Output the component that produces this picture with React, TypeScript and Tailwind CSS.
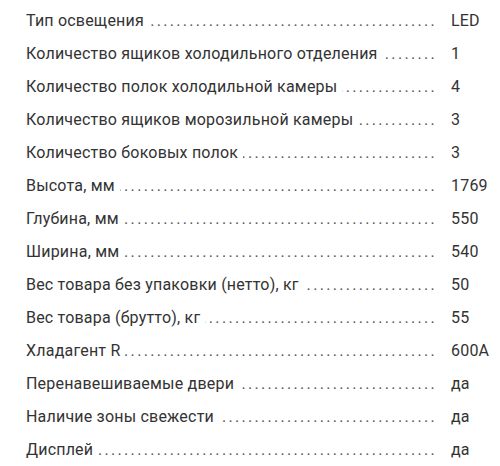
const specs: [string, string][] = [
  ['Тип освещения', 'LED'],
  ['Количество ящиков холодильного отделения', '1'],
  ['Количество полок холодильной камеры', '4'],
  ['Количество ящиков морозильной камеры', '3'],
  ['Количество боковых полок', '3'],
  ['Высота, мм', '1769'],
  ['Глубина, мм', '550'],
  ['Ширина, мм', '540'],
  ['Вес товара без упаковки (нетто), кг', '50'],
  ['Вес товара (брутто), кг', '55'],
  ['Хладагент R', '600A'],
  ['Перенавешиваемые двери', 'да'],
  ['Наличие зоны свежести', 'да'],
  ['Дисплей', 'да'],
];

const DOTS = '.'.repeat(80);

export default function App() {
  return (
    <div
      className="w-[500px] h-[466px] bg-white pt-[4px] text-[#333333] text-[16px]"
      style={{ fontFamily: 'Roboto, "Liberation Sans", sans-serif' }}
    >
      {specs.map(([label, value]) => (
        <div key={label} className="flex h-[33px] items-center pl-[26px] leading-[33px]">
          <span className="whitespace-nowrap tracking-[0.2px]">{label}</span>
          <span className="ml-[5px] mr-[14px] flex flex-1 justify-end overflow-hidden whitespace-nowrap text-[#555] tracking-[2.3px]">
            {DOTS}
          </span>
          <span className="w-[49px] whitespace-nowrap tracking-[0.2px]">{value}</span>
        </div>
      ))}
    </div>
  );
}
